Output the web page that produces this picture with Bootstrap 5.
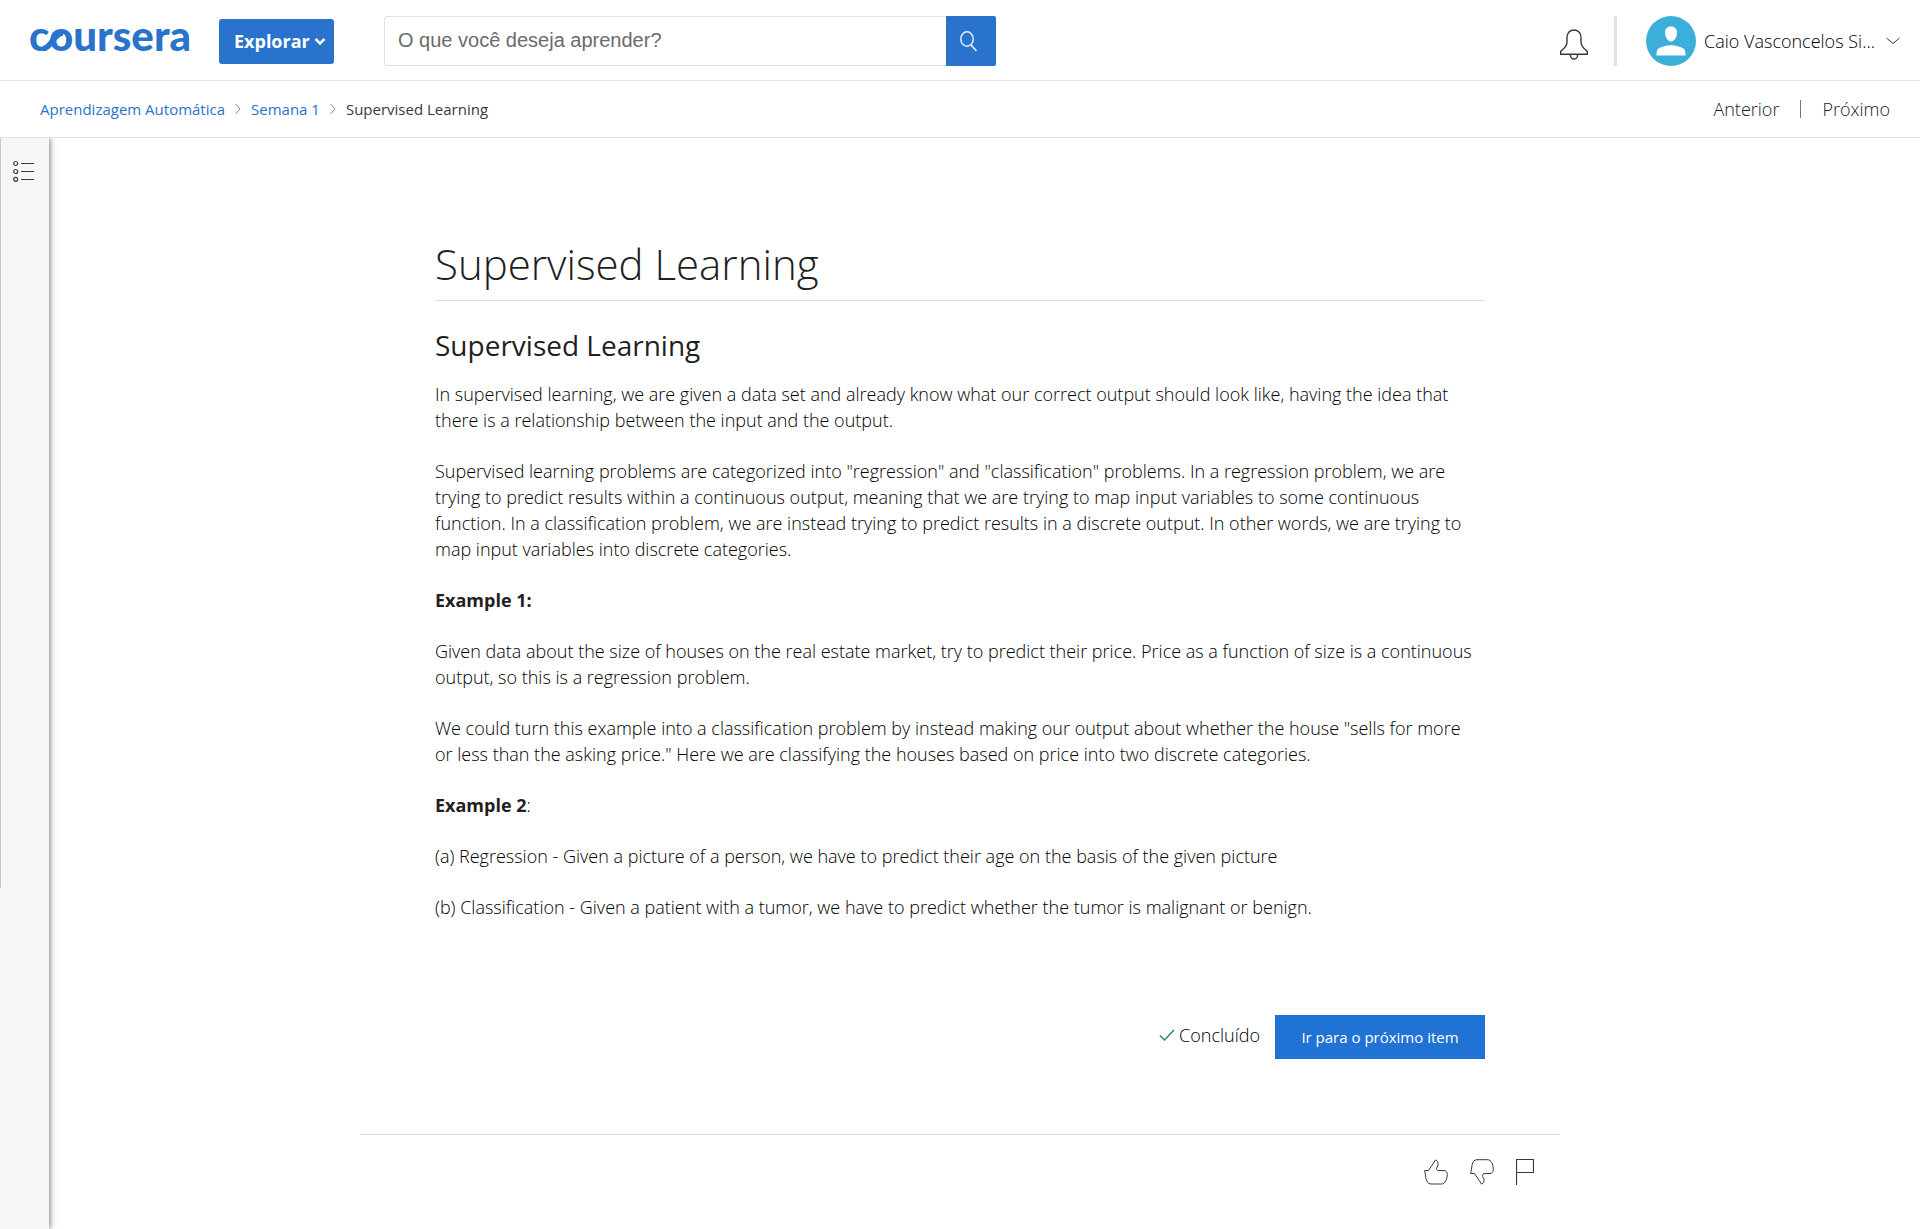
<!DOCTYPE html>
<html lang="pt-BR">
<head>
<meta charset="utf-8">
<meta name="viewport" content="width=device-width, initial-scale=1">
<title>Supervised Learning | Coursera</title>
<link rel="stylesheet" href="https://cdn.jsdelivr.net/npm/bootstrap@5.3.0/dist/css/bootstrap.min.css">
<style>
  body { font-family: "Open Sans", "Noto Sans", sans-serif; font-size: 18px; line-height: 26px; font-weight: 300; color: #000; }
  a { text-decoration: none; }
  strong { font-weight: 700; color: #1f1f1f; }
  svg { display: block; flex: none; fill: none; stroke: currentColor; }
  .top-bar { height: 81px; border-bottom: 1px solid #e1e1e1; padding: 2px 20px 0 30px; }
  .brand-logo { width: 160px; height: 32px; color: #2a73cc; overflow: visible; }
  .brand-logo text { font: 900 42px "Lato", "Open Sans", sans-serif; fill: currentColor; stroke: none; }
  .btn-explore { --bs-btn-bg: #2a73cc; --bs-btn-color: #fff; --bs-btn-hover-bg: #1f63b5; --bs-btn-hover-color: #fff; --bs-btn-border-width: 0; --bs-btn-border-radius: 3px; --bs-btn-font-weight: 700; width: 115px; height: 45px; font-size: 18px; margin-left: 29px; padding: 0 8px 0 15px; }
  .search-box { width: 612px; height: 50px; margin-left: 50px; }
  .search-box .form-control { font-family: "Liberation Sans", Arial, sans-serif; font-size: 20px; border-color: #e1e1e1; border-radius: 3px 0 0 3px; padding: 0 13px 2px; }
  .search-box .form-control::placeholder { color: #6b6b6b; opacity: 1; }
  .search-box .btn { background: #2a73cc; color: #e5eefa; width: 50px; border-radius: 0 2px 2px 0; padding: 0 0 0 13px; }
  .tool-btn { background: none; border: 0; padding: 0; color: #373a3c; font-weight: inherit; }
  .bar-divider { width: 3px; height: 50px; background: #e1e1e1; margin: 0 29px 0 26px; }
  .user-name { color: #000; margin: 0 11px 0 8px; }
  .sub-bar { height: 57px; border-bottom: 1px solid #e1e1e1; padding: 0 30px 0 40px; }
  .crumbs { font-size: 15px; font-weight: 400; gap: 10px; color: #373a3c; }
  .crumbs a { color: #2a73cc; }
  .crumbs svg { color: #8c8c8c; }
  .pager { color: #222; gap: 21px; }
  .pager a { color: inherit; }
  .pager-line { width: 1px; height: 18px; background: #757575; }
  .outline-rail { width: 49px; background: #f6f6f6; box-shadow: 1px 0 6px rgba(0,0,0,.5); clip-path: inset(0 -10px 0 0); }
  .rail-head { height: 750px; border-left: 1px solid #c7c7c7; padding: 22px 0 0 12px; }
  .page-main { padding: 96px 49px 0 0; }
  .lesson-wrap { width: 100%; max-width: 1200px; }
  .lesson-body { padding: 0 75px 75px; border-bottom: 1px solid #dcdcdc; }
  h1 { font-size: 42px; line-height: 60px; font-weight: 300; color: #1f1f1f; padding-bottom: 6px; border-bottom: 1px solid #dcdcdc; margin-bottom: 26px; }
  h2 { font-size: 28px; line-height: 36px; font-weight: 400; color: #1f1f1f; margin-bottom: 18px; }
  p { margin-bottom: 25px; }
  .finish-row { margin-top: 95px; gap: 15px; }
  .btn-next { --bs-btn-bg: #2073d4; --bs-btn-color: #fff; --bs-btn-hover-bg: #1a62b5; --bs-btn-hover-color: #fff; --bs-btn-border-width: 0; --bs-btn-border-radius: 0; width: 210px; height: 44px; font-size: 15px; padding: 0; }
  .react-row { padding: 24px 26px 24px 0; gap: 22px; }
</style>
<script src="https://cdn.jsdelivr.net/npm/bootstrap@5.3.0/dist/js/bootstrap.bundle.min.js"></script>
</head>
<body class="bg-white min-vh-100 d-flex flex-column">
<header class="top-bar d-flex align-items-center">
  <a href="#" aria-label="Coursera">
    <svg class="brand-logo" viewBox="0 0 160 32">
      <text x="-1" y="26">coursera</text>
      <path d="M13 23.500 C21 23.500 24 8 33 8" stroke-width="5.500"/>
    </svg>
  </a>
  <button type="button" class="btn btn-explore d-flex align-items-center justify-content-between">Explorar
    <svg width="12" height="10" viewBox="0 0 12 10"><path d="M1.500 3L6 7.500 10.500 3" stroke-width="2.500"/></svg>
  </button>
  <form class="search-box input-group flex-nowrap" role="search">
    <input type="text" class="form-control" placeholder="O que você deseja aprender?" aria-label="O que você deseja aprender?">
    <button type="button" class="btn" aria-label="Buscar">
      <svg width="18" height="22" viewBox="0 0 18 22"><ellipse cx="7" cy="9" rx="6.200" ry="7.200" stroke-width="1.500"/><path d="M11 15l5.500 6" stroke-width="1.700"/></svg>
    </button>
  </form>
  <div class="d-flex align-items-center ms-auto">
    <button type="button" class="tool-btn pt-2" aria-label="Notificações">
      <svg width="28" height="32" viewBox="0 0 28 32"><path d="M.7 25.300V22.500C3 20 7 18 7 13V8.500C7 4 10 1 14 1s7 3 7 7.500V13c0 5 4 7 6.300 9.500v2.800zM10.500 25.500v1a3.500 3.500 0 0 0 7 0v-1" stroke-width="1.400"/></svg>
    </button>
    <span class="bar-divider"></span>
    <button type="button" class="tool-btn d-flex align-items-center">
      <svg width="50" height="50" viewBox="0 0 50 50"><g stroke="none"><circle cx="25" cy="25" r="25" fill="#3bafda"/><path d="M25 10.500c4 0 6 2.500 6 6s-2 9-6 9-6-5.500-6-9 2-6 6-6zM10.500 39.500c0-3.500.3-6 2-7 3-2 8-3.300 12.500-3.300s9.500 1.300 12.500 3.300c1.700 1 2 3.500 2 7z" fill="#fff"/></g></svg>
      <span class="user-name">Caio Vasconcelos Si...</span>
      <svg width="14" height="8" viewBox="0 0 14 8"><path d="M.5 1L7 6.500 13.500 1"/></svg>
    </button>
  </div>
</header>
<nav class="sub-bar d-flex align-items-center justify-content-between" aria-label="Curso">
  <div class="crumbs d-flex align-items-center">
    <a href="#">Aprendizagem Automática</a>
    <svg width="6" height="12" viewBox="0 0 6 12"><path d="M.5 1L5 6 .5 11"/></svg>
    <a href="#">Semana 1</a>
    <svg width="6" height="12" viewBox="0 0 6 12"><path d="M.5 1L5 6 .5 11"/></svg>
    <span>Supervised Learning</span>
  </div>
  <div class="pager d-flex align-items-center">
    <a href="#">Anterior</a><span class="pager-line"></span><a href="#">Próximo</a>
  </div>
</nav>
<div class="d-flex flex-grow-1">
  <aside class="outline-rail flex-shrink-0">
    <div class="rail-head">
      <button type="button" class="tool-btn" aria-label="Conteúdo">
        <svg width="22" height="22" viewBox="0 0 22 22" stroke-width="1.200"><circle cx="2.700" cy="3.500" r="2"/><circle cx="2.700" cy="11.500" r="2"/><circle cx="2.700" cy="19.300" r="2"/><path d="M8 3.500h13M8 11.500h13M8 19.500h13"/></svg>
      </button>
    </div>
  </aside>
  <main class="page-main flex-grow-1 d-flex justify-content-center">
    <div class="lesson-wrap">
      <article class="lesson-body">
        <h1>Supervised Learning</h1>
        <h2>Supervised Learning</h2>
        <p>In supervised learning, we are given a data set and already know what our correct output should look like, having the idea that there is a relationship between the input and the output.</p>
        <p>Supervised learning problems are categorized into "regression" and "classification" problems. In a regression problem, we are trying to predict results within a continuous output, meaning that we are trying to map input variables to some continuous function. In a classification problem, we are instead trying to predict results in a discrete output. In other words, we are trying to map input variables into discrete categories.</p>
        <p><strong>Example 1:</strong></p>
        <p>Given data about the size of houses on the real estate market, try to predict their price. Price as a function of size is a continuous output, so this is a regression problem.</p>
        <p>We could turn this example into a classification problem by instead making our output about whether the house "sells for more or&nbsp;less than the asking price." Here we are classifying the houses based on price into two discrete categories.</p>
        <p><strong>Example 2</strong>:</p>
        <p>(a) Regression - Given a picture of a person, we have to predict their age on the basis of the given picture</p>
        <p class="mb-0">(b) Classification - Given a patient with a tumor, we have to predict whether the tumor is malignant or benign.</p>
        <div class="finish-row d-flex align-items-center justify-content-end">
          <span class="d-flex align-items-center gap-1 pb-1">
            <svg width="16" height="12" viewBox="0 0 16 12"><path d="M1 6.500L5.500 11 15 1" stroke="#2e8b60" stroke-width="1.500"/></svg>
            Concluído
          </span>
          <button type="button" class="btn btn-next">Ir para o próximo item</button>
        </div>
      </article>
      <div class="react-row d-flex justify-content-end">
        <button type="button" class="tool-btn" aria-label="Gostei"><svg width="24" height="26" viewBox="0 0 24 26"><path d="M.7 11.500H4.500L11.500 1C13.500 1 14.500 4 14 6L12.500 9.500C12.500 11 13.500 11.500 15 11.500H20C22 11.500 23.300 13 23.300 15.500C23.300 20 21 25 17.500 25H7C4 25 2.500 22 2 19.500Z"/></svg></button>
        <button type="button" class="tool-btn" aria-label="Não gostei"><svg width="24" height="26" viewBox="0 0 24 26"><path d="M.7 14.500H4.500L11.500 25C13.500 25 14.500 22 14 20L12.500 17.500C12.500 15.500 13 14.500 15 14.500H20C22 14.500 23.300 13 23.300 10.500C23.300 5 21 .7 17.500 .7H7C4 .7 2.500 3 2 6.500Z"/></svg></button>
        <button type="button" class="tool-btn" aria-label="Denunciar"><svg width="18" height="26" viewBox="0 0 18 26"><path d="M.5 26V.5h17v13H.5" stroke-width="1.200"/></svg></button>
      </div>
    </div>
  </main>
</div>
</body>
</html>
